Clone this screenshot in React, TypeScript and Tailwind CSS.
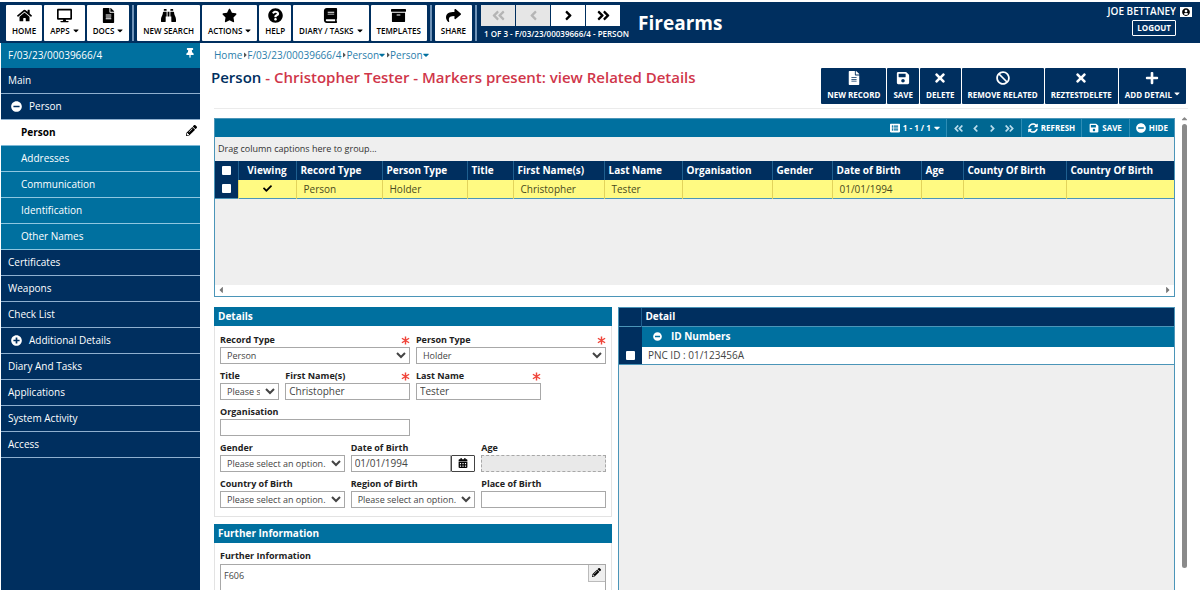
import type { ReactNode } from "react";
import type { IconType } from "react-icons";
import {
  FaAngleDoubleLeft,
  FaAngleDoubleRight,
  FaAngleLeft,
  FaAngleRight,
  FaArchive,
  FaBan,
  FaBinoculars,
  FaBook,
  FaCalendarAlt,
  FaCaretDown,
  FaCaretLeft,
  FaCaretRight,
  FaCaretUp,
  FaCheck,
  FaDesktop,
  FaFileAlt,
  FaHome,
  FaListAlt,
  FaMinusCircle,
  FaPencilAlt,
  FaPlus,
  FaPlusCircle,
  FaQuestionCircle,
  FaSave,
  FaShare,
  FaStar,
  FaSyncAlt,
  FaThumbtack,
  FaTimes,
  FaUserCircle,
} from "react-icons/fa";

type Tool = { label: string; icon: IconType; menu?: boolean };

const TOOL_GROUPS: Tool[][] = [
  [
    { label: "HOME", icon: FaHome },
    { label: "APPS", icon: FaDesktop, menu: true },
    { label: "DOCS", icon: FaFileAlt, menu: true },
  ],
  [
    { label: "NEW SEARCH", icon: FaBinoculars },
    { label: "ACTIONS", icon: FaStar, menu: true },
    { label: "HELP", icon: FaQuestionCircle },
    { label: "DIARY / TASKS", icon: FaBook, menu: true },
    { label: "TEMPLATES", icon: FaArchive },
  ],
  [{ label: "SHARE", icon: FaShare }],
];

const RECORD_ACTIONS: Tool[] = [
  { label: "NEW RECORD", icon: FaFileAlt },
  { label: "SAVE", icon: FaSave },
  { label: "DELETE", icon: FaTimes },
  { label: "REMOVE RELATED", icon: FaBan },
  { label: "REZTESTDELETE", icon: FaTimes },
  { label: "ADD DETAIL", icon: FaPlus, menu: true },
];

const PAGERS = [
  { label: "First record", icon: FaAngleDoubleLeft, disabled: true },
  { label: "Previous record", icon: FaAngleLeft, disabled: true },
  { label: "Next record", icon: FaAngleRight, disabled: false },
  { label: "Last record", icon: FaAngleDoubleRight, disabled: false },
];

type NavItem = {
  label: string;
  kind?: "open" | "closed" | "child" | "active";
};

const NAV: NavItem[] = [
  { label: "Person", kind: "open" },
  { label: "Person", kind: "active" },
  { label: "Addresses", kind: "child" },
  { label: "Communication", kind: "child" },
  { label: "Identification", kind: "child" },
  { label: "Other Names", kind: "child" },
  { label: "Certificates" },
  { label: "Weapons" },
  { label: "Check List" },
  { label: "Additional Details", kind: "closed" },
  { label: "Diary And Tasks" },
  { label: "Applications" },
  { label: "System Activity" },
  { label: "Access" },
];

const COLUMNS = [
  { title: "Viewing", width: "w-[58px]", value: "" },
  { title: "Record Type", width: "w-[86px]", value: "Person" },
  { title: "Person Type", width: "w-[85px]", value: "Holder" },
  { title: "Title", width: "w-[46px]", value: "" },
  { title: "First Name(s)", width: "w-[91px]", value: "Christopher" },
  { title: "Last Name", width: "w-[78px]", value: "Tester" },
  { title: "Organisation", width: "w-[90px]", value: "" },
  { title: "Gender", width: "w-[60px]", value: "" },
  { title: "Date of Birth", width: "w-[89px]", value: "01/01/1994" },
  { title: "Age", width: "w-[42px]", value: "" },
  { title: "County Of Birth", width: "w-[103px]", value: "" },
  { title: "Country Of Birth", width: "", value: "" },
];

function ToolButton({ label, icon: Icon, menu }: Tool) {
  return (
    <button className="flex h-9 flex-col items-center justify-between rounded-[1px] bg-white px-[6px] pt-[3px] pb-[5px] text-[8px] leading-[11px] font-semibold whitespace-nowrap text-black">
      <Icon className="size-[15px]" />
      <span className="flex items-center gap-[3px]">
        {label}
        {menu && <FaCaretDown className="h-[9px] w-[6px]" />}
      </span>
    </button>
  );
}

function ActionButton({ label, icon: Icon, menu }: Tool) {
  return (
    <button className="flex h-9 flex-col items-center justify-between rounded-[1px] bg-[#002f5f] px-[6px] pt-[3px] pb-1 text-[8px] leading-[11px] font-bold whitespace-nowrap text-white">
      <Icon className="size-[14px]" />
      <span className="flex items-center gap-[2px]">
        {label}
        {menu && <FaCaretDown className="mb-[2px] h-[9px] w-[6px]" />}
      </span>
    </button>
  );
}

function Header() {
  return (
    <header className="mt-[2px] flex h-[41px] shrink-0 bg-[#002f5f] pt-[3px] pl-[6px]">
      {TOOL_GROUPS.map((group, i) => (
        <div
          key={i}
          className="mr-[3px] flex h-9 gap-[2px] border-r-2 border-[#6f93b8] pr-[3px]"
        >
          {group.map((tool) => (
            <ToolButton key={tool.label} {...tool} />
          ))}
        </div>
      ))}
      <div className="pl-px">
        <div className="flex gap-px">
          {PAGERS.map(({ label, icon: Icon, disabled }) => (
            <button
              key={label}
              aria-label={label}
              disabled={disabled}
              className="flex h-[21px] w-[34px] items-center justify-center bg-white text-black disabled:bg-[#e6e6e6] disabled:text-[#b5b5b5]"
            >
              <Icon className="size-[15px]" />
            </button>
          ))}
        </div>
        <p className="px-[3px] pt-[2px] text-[8px] leading-[11px] font-semibold whitespace-nowrap text-white">
          1 OF 3 - F/03/23/00039666/4 - PERSON
        </p>
      </div>
      <h1 className="pl-[6px] text-[19px] leading-9 font-bold text-white">
        Firearms
      </h1>
      <div className="ml-auto flex flex-col items-end pr-2 text-white">
        <div className="flex items-center gap-1 text-[10px] leading-[13px] font-semibold">
          JOE BETTANEY
          <span className="flex h-[10px] w-3 items-center justify-center bg-white text-black">
            <FaUserCircle className="size-2" />
          </span>
        </div>
        <button className="mt-[2px] mr-4 h-4 rounded-[1px] border border-white px-1 text-[8px] leading-3 font-bold">
          LOGOUT
        </button>
      </div>
    </header>
  );
}

function NavRow({ label, kind }: NavItem) {
  if (kind === "active") {
    return (
      <a
        href="#"
        className="flex h-[26px] items-center justify-between border-b border-[#7db8d6] bg-white pr-[3px] pl-5 font-bold text-black"
      >
        {label}
        <FaPencilAlt className="mb-1 size-[11px]" />
      </a>
    );
  }
  if (kind === "child") {
    return (
      <a
        href="#"
        className="flex h-[26px] items-center border-b border-[#8fc7e0] bg-[#00709f] pl-5"
      >
        {label}
      </a>
    );
  }
  return (
    <a
      href="#"
      className="flex h-[26px] items-center border-b border-[#8fb0cf] pl-[7px]"
    >
      {kind === "open" && <FaMinusCircle className="mr-[7px] ml-[3px] size-[11px]" />}
      {kind === "closed" && <FaPlusCircle className="mr-[7px] ml-[3px] size-[11px]" />}
      {label}
    </a>
  );
}

function Sidebar() {
  return (
    <nav className="ml-px w-[199px] shrink-0 bg-[#002f5f] text-[10px] text-white">
      <div className="flex h-[25px] items-center justify-between bg-[#00709f] pr-[5px] pl-[7px]">
        F/03/23/00039666/4
        <FaThumbtack className="mb-[5px] size-[10px]" />
      </div>
      <a
        href="#"
        className="flex h-[26px] items-center border-b border-[#8fb0cf] pl-[7px]"
      >
        Main
      </a>
      {NAV.map((item) => (
        <NavRow key={`${item.label}-${item.kind}`} {...item} />
      ))}
    </nav>
  );
}

function Breadcrumb() {
  return (
    <div className="flex items-center gap-[2px] text-[10px] leading-4 text-[#2a7dab]">
      <a href="#">Home</a>
      <span className="flex items-center">
        <FaCaretRight className="h-2 w-[3px] text-[#555]" />
        <a href="#">F/03/23/00039666/4</a>
      </span>
      {["record", "section"].map((level) => (
        <span key={level} className="flex items-center">
          <FaCaretRight className="h-2 w-[3px] text-[#555]" />
          <a href="#" className="flex items-center">
            Person
            <FaCaretDown className="h-[10px] w-[6px] text-[#00709f]" />
          </a>
        </span>
      ))}
    </div>
  );
}

function GridToolbar() {
  return (
    <div className="flex h-[18px] items-stretch justify-end bg-[#00709f] text-[8px] font-bold text-white">
      <button className="flex items-center gap-[3px] px-[6px]">
        <FaListAlt className="size-[10px]" />
        1 - 1 / 1
        <FaCaretDown className="h-[10px] w-[6px]" />
      </button>
      <div className="flex items-center gap-[6px] border-x border-[#2e8db5] bg-[#006791] px-[6px] text-[#b8dcec]">
        {PAGERS.map(({ label, icon: Icon }) => (
          <button key={label} aria-label={`${label} in grid`}>
            <Icon className="size-[11px]" />
          </button>
        ))}
      </div>
      <button className="flex items-center gap-[3px] px-[6px]">
        <FaSyncAlt className="size-[10px]" />
        REFRESH
      </button>
      <button className="flex items-center gap-[3px] border-x border-[#2e8db5] px-[7px]">
        <FaSave className="size-[10px]" />
        SAVE
      </button>
      <button className="flex items-center gap-[3px] px-[6px]">
        <FaMinusCircle className="size-[10px]" />
        HIDE
      </button>
    </div>
  );
}

function Tick({ label }: { label: string }) {
  return (
    <input
      type="checkbox"
      aria-label={label}
      className="mx-auto block size-[9px] appearance-none rounded-[1px] bg-white"
    />
  );
}

function PeopleGrid() {
  return (
    <section className="border border-[#4b95b8] bg-[#efefef]">
      <GridToolbar />
      <p className="h-6 pl-[3px] text-[9px] leading-6 text-[#333]">
        Drag column captions here to group...
      </p>
      <table className="w-full table-fixed border-collapse text-left">
        <thead className="bg-[#002f5f] text-[10px] text-white">
          <tr className="h-[19px]">
            <th className="w-[23px]">
              <Tick label="Select all" />
            </th>
            {COLUMNS.map((c) => (
              <th
                key={c.title}
                className={`border-l border-[#1f5f8f] font-bold whitespace-nowrap ${c.width} ${c.title === "Viewing" ? "text-center" : "pl-1"}`}
              >
                {c.title}
              </th>
            ))}
          </tr>
        </thead>
        <tbody className="bg-[#fffa82] text-[10px] leading-4 text-[#4a4a20]">
          <tr className="h-[18px] border-b border-[#4b95b8]">
            <td className="bg-[#002f5f]">
              <Tick label="Select row" />
            </td>
            {COLUMNS.map((c) =>
              c.title === "Viewing" ? (
                <td key={c.title} className="border-l border-[#e2d35c]">
                  <FaCheck className="mx-auto size-[9px] text-black" />
                </td>
              ) : (
                <td key={c.title} className="border-l border-[#e2d35c] pl-[7px]">
                  {c.value}
                </td>
              ),
            )}
          </tr>
        </tbody>
      </table>
      <div className="mt-[86px] flex h-[11px] items-center justify-between bg-white px-1 text-[#777]">
        <FaCaretLeft className="h-[10px] w-1" />
        <FaCaretRight className="h-[10px] w-1" />
      </div>
    </section>
  );
}

function Field({
  id,
  label,
  span,
  required,
  children,
}: {
  id: string;
  label: string;
  span: string;
  required?: boolean;
  children: ReactNode;
}) {
  return (
    <div className={span}>
      <div className="flex h-[13px] items-center justify-between">
        <label htmlFor={id} className="text-[9px] font-bold text-[#222]">
          {label}
        </label>
        {required && (
          <svg viewBox="0 0 10 10" className="size-[9px] stroke-[#f0453a]">
            <path d="M5 0.5v9M1 2.5l8 5M9 2.5l-8 5" strokeWidth="1.6" />
          </svg>
        )}
      </div>
      {children}
    </div>
  );
}

const CONTROL =
  "block h-[17px] w-full border border-[#a8a8a8] bg-white text-[#444]";

function Select({ id, value }: { id: string; value: string }) {
  return (
    <select id={id} className={`${CONTROL} px-[2px] text-[9px]`}>
      <option>{value}</option>
    </select>
  );
}

function TextBox({ id, value = "" }: { id: string; value?: string }) {
  return (
    <input
      id={id}
      defaultValue={value}
      className={`${CONTROL} px-[3px] text-[10px]`}
    />
  );
}

function PanelTitle({ children }: { children: ReactNode }) {
  return (
    <h3 className="h-[19px] bg-[#00709f] pl-1 text-[10px] leading-[19px] font-bold text-white">
      {children}
    </h3>
  );
}

function DetailsPanel() {
  return (
    <section>
      <PanelTitle>Details</PanelTitle>
      <div className="grid grid-cols-6 gap-[6px] border border-t-0 border-[#e3e3e3] px-[5px] pt-2 pb-2">
        <Field id="recordType" label="Record Type" span="col-span-3" required>
          <Select id="recordType" value="Person" />
        </Field>
        <Field id="personType" label="Person Type" span="col-span-3" required>
          <Select id="personType" value="Holder" />
        </Field>
        <Field id="title" label="Title" span="col-span-1">
          <Select id="title" value="Please select an option." />
        </Field>
        <Field id="firstName" label="First Name(s)" span="col-span-2" required>
          <TextBox id="firstName" value="Christopher" />
        </Field>
        <Field id="lastName" label="Last Name" span="col-span-2" required>
          <TextBox id="lastName" value="Tester" />
        </Field>
        <Field id="organisation" label="Organisation" span="col-span-3 col-start-1">
          <TextBox id="organisation" />
        </Field>
        <Field id="gender" label="Gender" span="col-span-2 col-start-1">
          <Select id="gender" value="Please select an option." />
        </Field>
        <Field id="dob" label="Date of Birth" span="col-span-2">
          <div className="flex">
            <TextBox id="dob" value="01/01/1994" />
            <button
              aria-label="Pick a date"
              className="flex h-[17px] w-6 shrink-0 items-center justify-center rounded-[1px] border border-[#444]"
            >
              <FaCalendarAlt className="size-[10px]" />
            </button>
          </div>
        </Field>
        <Field id="age" label="Age" span="col-span-2">
          <input
            id="age"
            disabled
            className="block h-[17px] w-full border border-dashed border-[#a8a8a8] bg-[#e9e9e9]"
          />
        </Field>
        <Field id="country" label="Country of Birth" span="col-span-2">
          <Select id="country" value="Please select an option." />
        </Field>
        <Field id="region" label="Region of Birth" span="col-span-2">
          <Select id="region" value="Please select an option." />
        </Field>
        <Field id="place" label="Place of Birth" span="col-span-2">
          <TextBox id="place" />
        </Field>
      </div>
    </section>
  );
}

function FurtherInformation() {
  return (
    <section>
      <PanelTitle>Further Information</PanelTitle>
      <div className="border border-t-0 border-[#e3e3e3] px-[5px] pt-[6px] pb-2">
        <label htmlFor="further" className="block pb-px text-[9px] leading-[14px] font-bold text-[#222]">
          Further Information
        </label>
        <div className="flex items-start border border-[#a8a8a8]">
          <textarea
            id="further"
            defaultValue="F606"
            className="h-16 flex-1 resize-none px-[3px] py-1 text-[9px] text-[#444]"
          />
          <button
            aria-label="Edit further information"
            className="flex size-[17px] items-center justify-center border-b border-l border-[#bbb] bg-[#efefef]"
          >
            <FaPencilAlt className="size-[9px]" />
          </button>
        </div>
      </div>
    </section>
  );
}

function RelatedDetail() {
  return (
    <section className="border border-[#4b95b8] bg-[#efefef]">
      <table className="w-full table-fixed border-collapse text-left">
        <thead>
          <tr className="h-[19px] bg-[#002f5f] text-[10px] text-white">
            <th className="w-[23px]" />
            <th className="border-l border-[#1f5f8f] pl-[3px] font-bold">Detail</th>
          </tr>
        </thead>
        <tbody>
          <tr className="h-5 border-t border-[#4b95b8] text-[10px] font-bold text-white">
            <td className="bg-[#002f5f]" />
            <td className="bg-[#00709f] pl-[11px]">
              <span className="flex items-center gap-[9px]">
                <FaMinusCircle className="size-[9px]" />
                ID Numbers
              </span>
            </td>
          </tr>
          <tr className="h-[18px] border-b border-[#4b95b8] text-[10px] leading-4 text-[#444]">
            <td className="bg-[#002f5f]">
              <Tick label="Select PNC ID" />
            </td>
            <td className="bg-white pl-[6px]">PNC ID : 01/123456A</td>
          </tr>
        </tbody>
      </table>
    </section>
  );
}

export default function App() {
  return (
    <div className="flex h-screen flex-col overflow-hidden bg-white font-['Open_Sans',sans-serif]">
      <Header />
      <div className="flex min-h-0 flex-1">
        <Sidebar />
        <main className="flex min-w-0 flex-1 flex-col pr-3 pl-[14px]">
          <div className="pt-1">
            <Breadcrumb />
          </div>
          <div className="flex h-[46px] items-start justify-between border-b border-[#ebebeb] pr-[2px]">
            <h2 className="-ml-[3px] pt-1 text-[15px] leading-5 font-semibold text-[#002f5f]">
              Person{" "}
              <span className="text-[#d0364a]">
                - Christopher Tester - Markers present: view Related Details
              </span>
            </h2>
            <div className="flex gap-px pt-[5px]">
              {RECORD_ACTIONS.map((action) => (
                <ActionButton key={action.label} {...action} />
              ))}
            </div>
          </div>
          <div className="flex min-h-0 flex-1 pt-[9px]">
            <div className="flex min-w-0 flex-1 flex-col gap-[10px]">
              <PeopleGrid />
              <div className="grid min-h-0 flex-1 grid-cols-[5fr_7fr] gap-[6px]">
                <div className="flex flex-col gap-[7px]">
                  <DetailsPanel />
                  <FurtherInformation />
                </div>
                <RelatedDetail />
              </div>
            </div>
            <div className="-mt-1 ml-[5px] flex w-2 flex-col items-center text-[#888]">
              <FaCaretUp className="size-[9px] shrink-0" />
              <div className="mt-px mb-[22px] w-[5px] flex-1 rounded-full bg-[#8a8a8a]" />
            </div>
          </div>
        </main>
      </div>
    </div>
  );
}
